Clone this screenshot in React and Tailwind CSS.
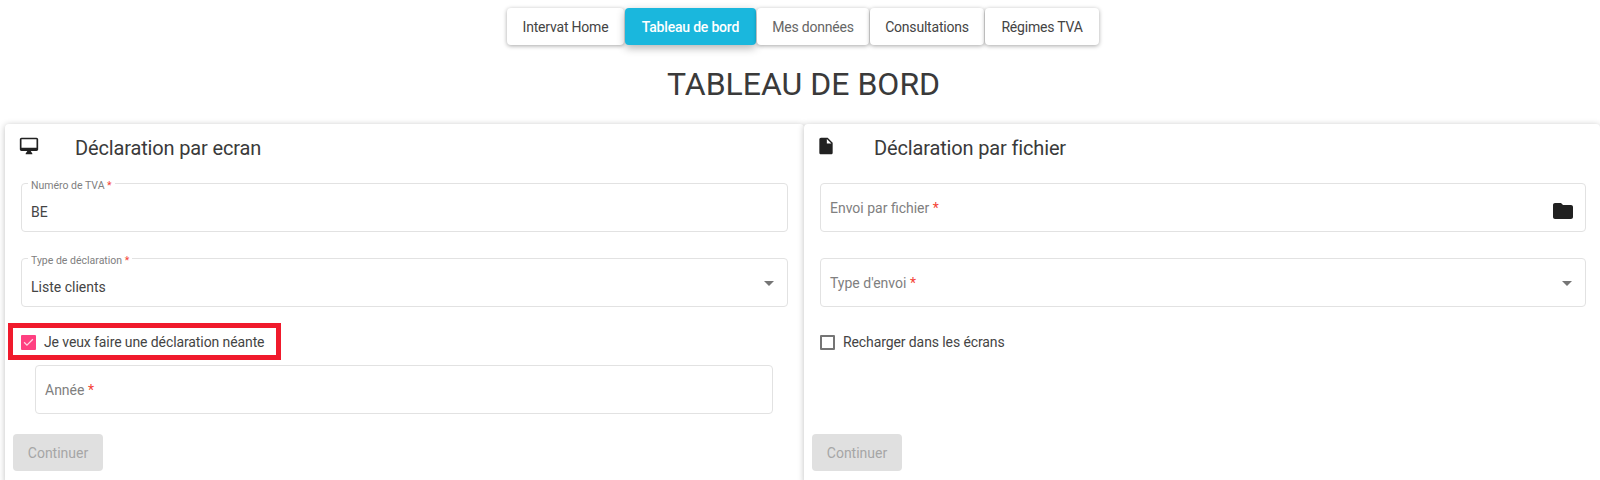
const F = "font-['Roboto',sans-serif]";

function Nav({ children, active, w, muted }) {
  return (
    <button
      className={
        "h-[37px] rounded text-sm tracking-[-0.2px] " +
        w +
        (active
          ? " bg-[#1ab7dd] font-medium text-white shadow-[0_3px_8px_rgba(0,0,0,0.3)]"
          : " bg-white shadow-[0_1px_4px_rgba(0,0,0,0.35)] " + (muted ? "text-[#666666]" : "text-[#444444]"))
      }
    >
      {children}
    </button>
  );
}

function Req() {
  return <span className="text-[#f44336]"> *</span>;
}

function Field({ label, value, arrow, folder, className = "" }) {
  const floated = value !== undefined;
  return (
    <div className={"relative h-[49px] rounded border border-[#e2e2e2] bg-white " + className}>
      {floated ? (
        <>
          <span className="absolute left-[6px] top-[-4px] bg-white px-[3px] text-[10.5px] leading-[12px] text-[#808080]">
            {label}
            <Req />
          </span>
          <span className="absolute left-[9px] top-[18px] text-sm leading-5 text-[#444444]">{value}</span>
        </>
      ) : (
        <span className="absolute left-[9px] top-[14px] text-sm leading-5 text-[#808080]">
          {label}
          <Req />
        </span>
      )}
      {arrow && (
        <svg viewBox="0 0 24 24" className="absolute right-[6px] top-[12px] h-6 w-6 fill-[#757575]">
          <path d="M7 10l5 5 5-5z" />
        </svg>
      )}
      {folder && (
        <svg viewBox="0 0 24 24" className="absolute right-[10px] top-[15px] h-6 w-6 fill-[#212121]">
          <path d="M10 4H4c-1.1 0-1.99.9-1.99 2L2 18c0 1.1.9 2 2 2h16c1.1 0 2-.9 2-2V8c0-1.1-.9-2-2-2h-8l-2-2z" />
        </svg>
      )}
    </div>
  );
}

function Check({ checked, label }) {
  return (
    <div className="flex h-4 items-center gap-2">
      {checked ? (
        <span className="flex h-[15px] w-[15px] items-center justify-center rounded-[1px] bg-[#ff4081]">
          <svg viewBox="0 0 24 24" className="h-4 w-4 fill-none stroke-[#ffd5e3] stroke-2">
            <path d="M5 12.5l4.5 4.5L19 7.5" />
          </svg>
        </span>
      ) : (
        <span className="h-[15px] w-[15px] rounded-[1px] border-2 border-[#757575]" />
      )}
      <span className="text-sm leading-4 tracking-[-0.1px] text-[#444444]">{label}</span>
    </div>
  );
}

function CardHead({ icon, title }) {
  return (
    <div className="flex h-[59px] items-start">
      <div className="flex w-[54px] shrink-0 pt-[12px]">{icon}</div>
      <h2 className="pt-[10px] text-xl leading-7 tracking-[-0.15px] text-[#3a3a3a]">{title}</h2>
    </div>
  );
}

function Continue() {
  return (
    <button className="h-[37px] w-[90px] rounded bg-[#e0e0e0] text-sm text-[#a6a6a6]">Continuer</button>
  );
}

export default function App() {
  return (
    <div className={"h-[480px] overflow-hidden bg-white " + F}>
      <nav className="flex justify-center pl-[6px] pt-2">
        <div className="flex gap-px">
          <Nav w="w-[117px]">Intervat Home</Nav>
          <Nav active w="w-[131px]">Tableau de bord</Nav>
          <Nav muted w="w-[112px]">Mes données</Nav>
          <Nav w="w-[114px]">Consultations</Nav>
          <Nav w="w-[114px]">Régimes TVA</Nav>
        </div>
      </nav>
      <h1 className="mt-[21px] pl-[7px] text-center text-[32px] leading-9 text-[#3a3a3a]">TABLEAU DE BORD</h1>
      <div className="mt-[22px] flex pl-[5px]">
        <section className="relative h-[360px] w-[799px] rounded bg-white px-4 shadow-[0_1px_6px_rgba(0,0,0,0.25)]">
          <CardHead
            icon={
              <svg viewBox="0 0 24 24" className="ml-[-2px] h-5 w-5 fill-[#212121]">
                <path d="M21 2H3c-1.1 0-2 .9-2 2v12c0 1.1.9 2 2 2h7l-2 3v1h8v-1l-2-3h7c1.1 0 2-.9 2-2V4c0-1.1-.9-2-2-2zm0 12H3V4h18v10z" />
              </svg>
            }
            title="Déclaration par ecran"
          />
          <div className="flex flex-col gap-[26px]">
            <Field label="Numéro de TVA" value="BE" />
            <Field label="Type de déclaration" value="Liste clients" arrow />
          </div>
          <div className="relative mt-[27px]">
            <Check checked label="Je veux faire une déclaration néante" />
            <div className="absolute left-[-13px] top-[-11px] h-[37px] w-[273px] border-[5px] border-[#f01a2c]" />
          </div>
          <Field label="Année" className="ml-[14px] mr-[15px] mt-[15px]" />
          <div className="ml-[-8px] mt-[20px]">
            <Continue />
          </div>
        </section>
        <section className="relative h-[360px] w-[796px] rounded bg-white pl-4 pr-[14px] shadow-[0_1px_6px_rgba(0,0,0,0.25)]">
          <CardHead
            icon={
              <svg viewBox="0 0 24 24" className="ml-[-4px] h-5 w-5 fill-[#212121]">
                <path d="M6 2c-1.1 0-1.99.9-1.99 2L4 20c0 1.1.89 2 1.99 2H18c1.1 0 2-.9 2-2V8l-6-6H6zm7 7V3.5L18.5 9H13z" />
              </svg>
            }
            title="Déclaration par fichier"
          />
          <div className="flex flex-col gap-[26px]">
            <Field label="Envoi par fichier" folder />
            <Field label="Type d'envoi" arrow />
          </div>
          <div className="mt-[27px]">
            <Check label="Recharger dans les écrans" />
          </div>
          <div className="ml-[-8px] mt-[84px]">
            <Continue />
          </div>
        </section>
      </div>
    </div>
  );
}
